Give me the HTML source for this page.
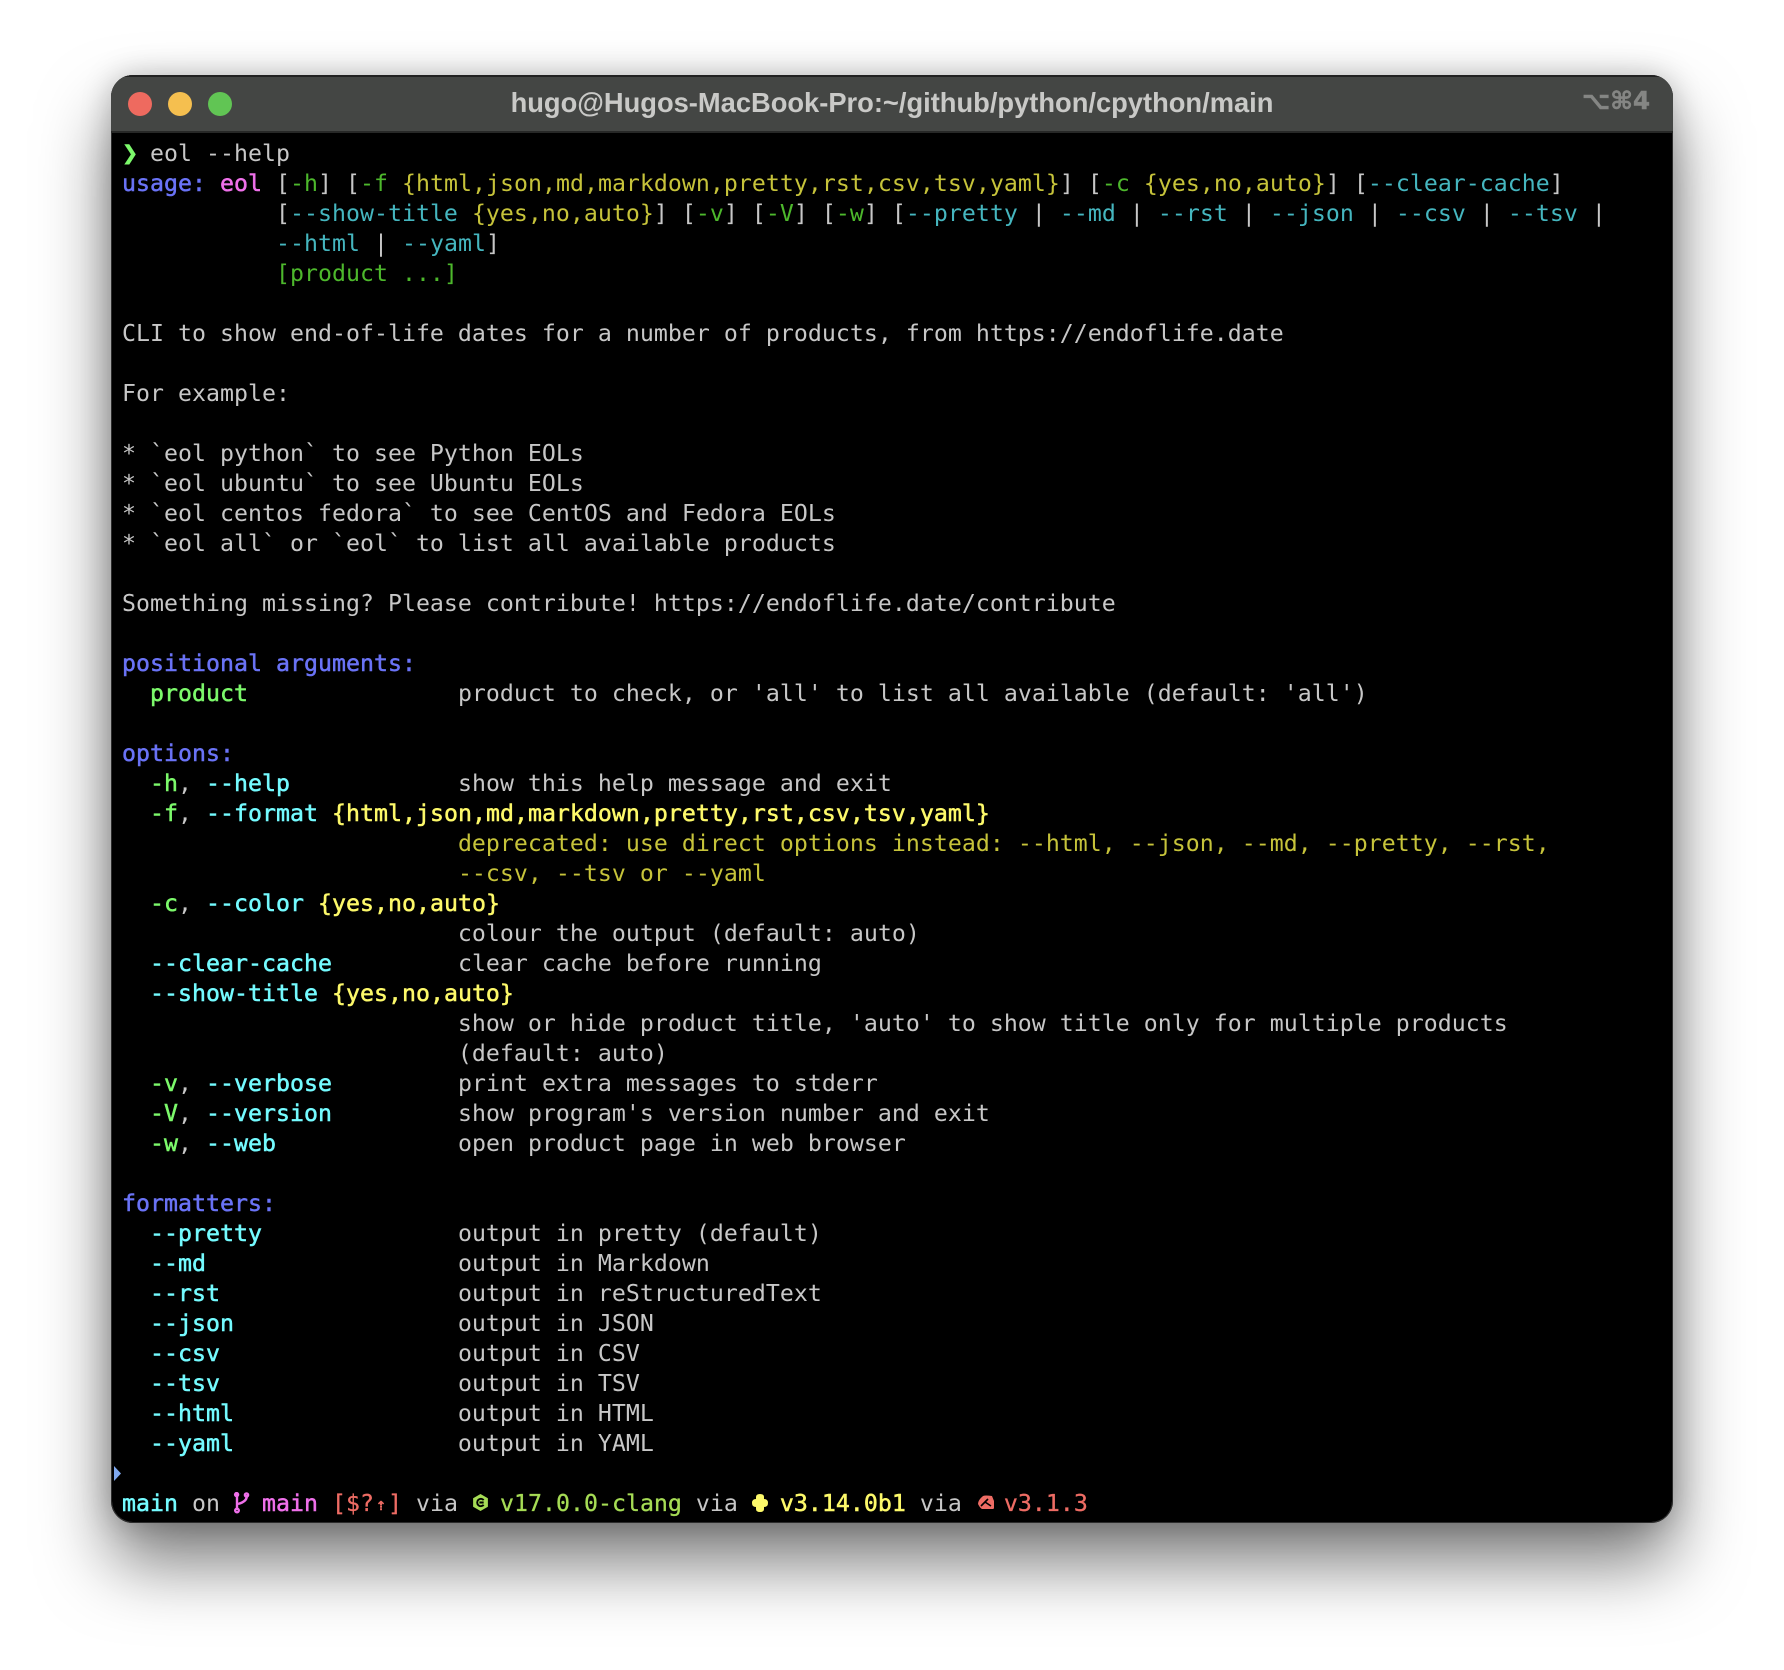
<!DOCTYPE html>
<html><head><meta charset="utf-8"><style>
html,body{margin:0;padding:0;width:1784px;height:1670px;background:#fff;overflow:hidden}
.win{position:absolute;left:111px;top:75px;width:1562px;height:1448px;background:#000;border-radius:22px;box-shadow:0 0 0 1px #666 inset,0 40px 70px rgba(0,0,0,.52),0 0 30px rgba(0,0,0,.22);overflow:hidden;outline:1px solid rgba(20,20,20,.7);outline-offset:-1px}
.bar{position:absolute;left:0;top:0;width:100%;height:54px;background:#444644;border-bottom:2px solid #272827;border-top:2px solid #222}
.dot{position:absolute;top:15px;width:24px;height:24px;border-radius:50%}
.title{position:absolute;left:0;top:8px;width:100%;text-align:center;font:bold 27.3px/36px "Liberation Sans",sans-serif;color:#c9c9c7}
.key{position:absolute;right:23px;top:6px;font:bold 24.5px/36px "DejaVu Sans",sans-serif;color:#858684;-webkit-text-stroke:.5px #858684}
pre{position:absolute;left:11px;top:64px;margin:0;font:23.2px/30px "DejaVu Sans Mono","Liberation Mono",monospace;letter-spacing:.037px;color:#c7c7c7;white-space:pre}
.u{color:#6a73f6;-webkit-text-stroke:.5px #6a73f6}.m{color:#ef70ea;-webkit-text-stroke:.5px #ef70ea}
.g{color:#4db82c}.y{color:#c6c33a}.c{color:#45b6bf}
.G{color:#7cf96b;-webkit-text-stroke:.5px #7cf96b}.C{color:#74fbff;-webkit-text-stroke:.5px #74fbff}.Y{color:#fdf96a;-webkit-text-stroke:.5px #fdf96a}
.r{color:#ee6c64;-webkit-text-stroke:.3px #ee6c64}.LB{color:#a6dc55;-webkit-text-stroke:.3px #a6dc55}
.ar{display:inline-block;width:14px;text-align:center;font-size:17px;line-height:0;letter-spacing:0;vertical-align:1px;-webkit-text-stroke:.5px #ee6c64}
.pr{display:inline-block;width:14px;font-size:27px;line-height:0;letter-spacing:0;vertical-align:-1px}
svg{position:absolute}
</style></head><body>
<div class="win">
<div class="bar">
<div class="dot" style="left:17px;background:#ee6a5f"></div>
<div class="dot" style="left:57px;background:#f5bf4f"></div>
<div class="dot" style="left:97px;background:#61c554"></div>
<div class="title">hugo@Hugos-MacBook-Pro:~/github/python/cpython/main</div>
<div class="key">⌥⌘4</div>
</div>
<pre><span class="G pr">❯</span> eol --help
<span class="u">usage:</span> <span class="m">eol</span> [<span class="g">-h</span>] [<span class="g">-f</span> <span class="y">{html,json,md,markdown,pretty,rst,csv,tsv,yaml}</span>] [<span class="g">-c</span> <span class="y">{yes,no,auto}</span>] [<span class="c">--clear-cache</span>]
           [<span class="c">--show-title</span> <span class="y">{yes,no,auto}</span>] [<span class="g">-v</span>] [<span class="g">-V</span>] [<span class="g">-w</span>] [<span class="c">--pretty</span> | <span class="c">--md</span> | <span class="c">--rst</span> | <span class="c">--json</span> | <span class="c">--csv</span> | <span class="c">--tsv</span> |
           <span class="c">--html</span> | <span class="c">--yaml</span>]
           <span class="g">[product ...]</span>

CLI to show end-of-life dates for a number of products, from https://endoflife.date

For example:

* `eol python` to see Python EOLs
* `eol ubuntu` to see Ubuntu EOLs
* `eol centos fedora` to see CentOS and Fedora EOLs
* `eol all` or `eol` to list all available products

Something missing? Please contribute! https://endoflife.date/contribute

<span class="u">positional arguments:</span>
  <span class="G">product</span>               product to check, or 'all' to list all available (default: 'all')

<span class="u">options:</span>
  <span class="G">-h</span>, <span class="C">--help</span>            show this help message and exit
  <span class="G">-f</span>, <span class="C">--format</span> <span class="Y">{html,json,md,markdown,pretty,rst,csv,tsv,yaml}</span>
                        <span class="y">deprecated: use direct options instead: --html, --json, --md, --pretty, --rst,</span>
                        <span class="y">--csv, --tsv or --yaml</span>
  <span class="G">-c</span>, <span class="C">--color</span> <span class="Y">{yes,no,auto}</span>
                        colour the output (default: auto)
  <span class="C">--clear-cache</span>         clear cache before running
  <span class="C">--show-title</span> <span class="Y">{yes,no,auto}</span>
                        show or hide product title, 'auto' to show title only for multiple products
                        (default: auto)
  <span class="G">-v</span>, <span class="C">--verbose</span>         print extra messages to stderr
  <span class="G">-V</span>, <span class="C">--version</span>         show program's version number and exit
  <span class="G">-w</span>, <span class="C">--web</span>             open product page in web browser

<span class="u">formatters:</span>
  <span class="C">--pretty</span>              output in pretty (default)
  <span class="C">--md</span>                  output in Markdown
  <span class="C">--rst</span>                 output in reStructuredText
  <span class="C">--json</span>                output in JSON
  <span class="C">--csv</span>                 output in CSV
  <span class="C">--tsv</span>                 output in TSV
  <span class="C">--html</span>                output in HTML
  <span class="C">--yaml</span>                output in YAML

<span class="C">main</span> on   <span class="m">main</span> <span class="r">[$?<span class="ar">⇡</span>]</span> via   <span class="LB">v17.0.0-clang</span> via   <span class="Y">v3.14.0b1</span> via   <span class="r">v3.1.3</span></pre>
<svg style="left:3px;top:1391px" width="8" height="15" viewBox="0 0 8 15"><path d="M0 0L7 7.500L0 15Z" fill="#7fa8ee"/></svg>
<svg style="left:122px;top:1417px" width="18" height="22" viewBox="0 0 18 22" fill="none" stroke="#ef70ea" stroke-width="2.400"><path d="M4 2V18"/><path d="M13.500 3c1 4-1.500 7-8.500 9"/><circle cx="3.600" cy="2.600" r="1.500"/><circle cx="13.500" cy="3" r="1.600"/><circle cx="4" cy="18.500" r="1.800"/></svg>
<svg style="left:360px;top:1418px" width="19" height="19" viewBox="0 0 18 18"><path d="M9 1L16 5V13L9 17L2 13V5Z" fill="#a6dc55"/><path d="M12 6.700A3.500 3.500 0 1 0 12 11.300M8 9H12" fill="none" stroke="#000" stroke-width="1.800"/></svg>
<svg style="left:640px;top:1419px" width="18" height="18" viewBox="0 0 18 18"><path d="M5 3Q5 0 9 0Q13 0 13 3V5Q17 5 17 9Q17 13 13 13V15Q13 18 9 18Q5 18 5 15V13Q1 13 1 9Q1 5 5 5Z" fill="#fdf96a"/></svg>
<svg style="left:866px;top:1420px" width="18" height="16" viewBox="0 0 18 16"><path d="M6 1Q8 0 15 1L17 6V13Q17 14 15 14H5Q3 13 1 9Q1 5 6 1Z" fill="#ee6c64"/><path d="M11 4L8 7L4 11M8 7L14 11" fill="none" stroke="#000" stroke-width="1.600"/></svg>
</div>
</body></html>
